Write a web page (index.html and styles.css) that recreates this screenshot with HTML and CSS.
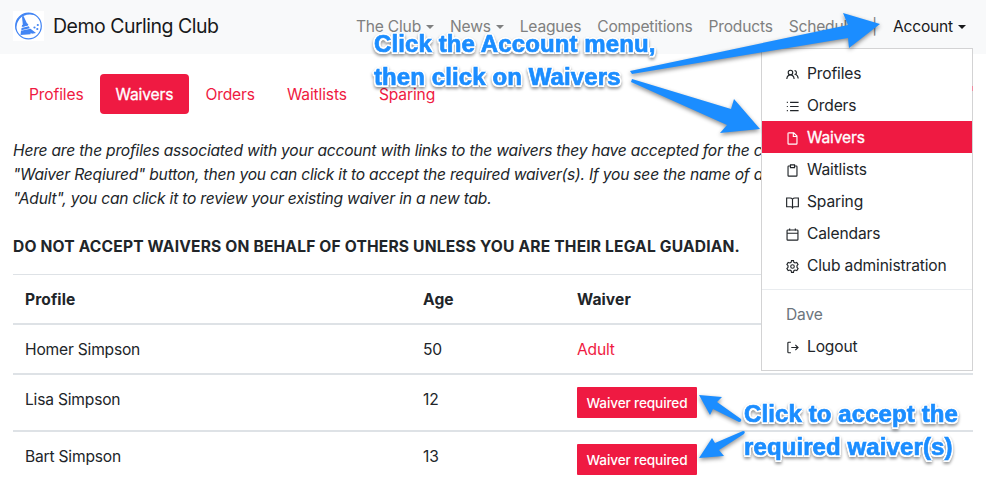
FILE: index.html
```html
<!DOCTYPE html>
<html lang="en">
<head>
<meta charset="utf-8">
<title>Demo Curling Club</title>
<link rel="stylesheet" href="styles.css">
</head>
<body>
<header class="navbar">
  <svg class="logo" viewBox="0 0 31 30">
    <rect width="31" height="30" fill="#fff"/>
    <circle cx="15.5" cy="15" r="12.8" fill="none" stroke="#4285f4" stroke-width="1.2"/>
    <path d="M3 19A13.2 13.2 0 0 1 23 4.300Q12 1.500 6.500 8Q3 13 3 19Z" fill="#4285f4"/>
    <path d="M9 5.500l1.500-.5 4.500 9.500-5 1.200z" fill="#4285f4"/>
    <path d="M9 14l5.500-1.500 1 1.600-6.700 2zM8.500 17l7.300-1.800 1 2-8.500 2zM8 19.700l9.500-2 5.500 4.300-4.200.8-1-1-.3 1.500L7.500 24z" fill="#4285f4"/>
    <circle cx="21.500" cy="16.500" r="1.100" fill="#4285f4"/><circle cx="24.800" cy="14" r="1.100" fill="#4285f4"/><circle cx="24.300" cy="18" r="1.100" fill="#4285f4"/>
  </svg>
  <span class="brand">Demo Curling Club</span>
  <nav class="links">
    <a class="caret">The Club</a><a class="caret">News</a><a>Leagues</a><a>Competitions</a><a>Products</a><a>Schedule</a><a>|</a><a class="caret active">Account</a>
  </nav>
</header>
<main>
  <nav class="pills"><a>Profiles</a><a class="on">Waivers</a><a>Orders</a><a>Waitlists</a><a>Sparing</a></nav>
  <p class="intro">Here are the profiles associated with your account with links to the waivers they have accepted for the c<br>"Waiver Reqiured" button, then you can click it to accept the required waiver(s). If you see the name of a<br>"Adult", you can click it to review your existing waiver in a new tab.</p>
  <p class="warning">DO NOT ACCEPT WAIVERS ON BEHALF OF OTHERS UNLESS YOU ARE THEIR LEGAL GUADIAN.</p>
  <div class="table">
    <div class="row head"><span>Profile</span><span>Age</span><span>Waiver</span></div>
    <div class="row"><span>Homer Simpson</span><span>50</span><span><a class="adult">Adult</a></span></div>
    <div class="row"><span>Lisa Simpson</span><span>12</span><span><button>Waiver required</button></span></div>
    <div class="row"><span>Bart Simpson</span><span>13</span><span><button>Waiver required</button></span></div>
  </div>
</main>
<i class="edge"></i>
<aside class="menu">
  <a><svg viewBox="0 0 16 16"><circle cx="5.500" cy="5.500" r="2.800"/><path d="M1 13.500c.3-3.200 2-5 4.500-5s4.200 1.800 4.500 5M10.500 3.300a2.300 2.300 0 0 1 1 4.400c2 .7 3.300 2.600 3.500 5.300"/></svg>Profiles</a>
  <a><svg viewBox="0 0 16 16"><path d="M5 3h10.500M5 8h10.500M5 13h10.500M1 3h1.300M1 8h1.300M1 13h1.300"/></svg>Orders</a>
  <a class="selected"><svg viewBox="0 0 16 16"><path d="M3.500 1h6l4 4v9.200q0 .8-.8.800H3.300q-.8 0-.8-.8V1.800q0-.8.8-.8M9 1.500v4h4"/></svg>Waivers</a>
  <a><svg viewBox="0 0 16 16"><path d="M5 2.500H3.300q-.8 0-.8.8v10.900q0 .8.800.800h9.400q.8 0 .8-.8V3.300q0-.8-.8-.8H11M5.500 1h5v3.500h-5z"/></svg>Waitlists</a>
  <a><svg viewBox="0 0 16 16"><path d="M8 4v10M8 4Q7 2.500 5 2.500H.8v10.700H6Q7.500 13.200 8 14.500Q8.500 13.200 10 13.200h5.200V2.500H11Q9 2.500 8 4"/></svg>Sparing</a>
  <a><svg viewBox="0 0 16 16"><rect x="1.300" y="2.500" width="13.400" height="12.500" rx="1"/><path d="M1.300 6.500h13.400M4.500 .5v2.500M11.500 .5v2.500"/></svg>Calendars</a>
  <a><svg viewBox="0 0 16 16"><path d="M6.800.8h2.400l.5 2 1.500.9 2-.6 1.600 2.300L13.500 7v2l1.400 1.600-1.600 2.300-2.200-.6-1.400.9-.5 2H6.800l-.5-2-1.400-.9-2.200.6-1.600-2.300L2.500 9V7L1.100 5.400l1.600-2.300 2.100.6 1.500-.9z"/><circle cx="8" cy="8" r="2.200"/></svg>Club administration</a>
  <hr>
  <span class="user">Dave</span>
  <a><svg viewBox="0 0 16 16"><path d="M6 1.500H3.300q-1 0-1 1v11q0 1 1 1H6M6.500 8h8M11.500 4.800L14.800 8l-3.300 3.200"/></svg>Logout</a>
</aside>
<svg class="arrows" viewBox="0 0 986 497">
  <path d="M630 71L848 25 843 13 880 24 849 48 848 38 632 74Z"/>
  <path d="M632 79L731 109 734 99 760 129 720 133 727 125 631 82Z"/>
  <path d="M699 395L722 397 717 402 741 419Q742 422 739 422L713 409 710 415Z"/>
  <path d="M699 458L712 438 715 443 743 431Q746 431 744 434L719 450 724 456Z"/>
</svg>
<div class="note first">Click the Account menu,<br>then click on Waivers</div>
<div class="note second">Click to accept the<br>required waiver(s)</div>
</body>
</html>
```
FILE: styles.css
```css
* { box-sizing: border-box; }
body { margin: 0; width: 986px; height: 497px; overflow: hidden; position: relative; background: #fff; color: #212529; font: 15.6px/24px Inter, sans-serif; letter-spacing: -.2px; white-space: nowrap; }
.navbar { height: 54px; background: #f8f9fa; display: flex; align-items: center; padding: 0 20px 2px 13px; }
.logo { width: 31px; height: 30px; margin-right: 9px; }
.brand { font-size: 19.5px; letter-spacing: -.5px; color: #18191b; }
.links { display: flex; margin-left: auto; gap: 16px; padding-top: 2px; color: #7f8080; }
.links a { display: flex; align-items: center; }
.caret::after { content: ""; margin-left: 5px; border: 4.5px solid transparent; border-top-color: currentColor; border-bottom: 0; }
.links .active { color: #18191b; }
main { padding: 20px 13px 0; }
.pills { display: flex; height: 40px; margin-bottom: 24px; color: #ef1a42; letter-spacing: -.13px; }
.pills a { padding: 9px 16px 7px; }
.pills .on { background: #ef1a42; color: #fff; border-radius: 4px; -webkit-text-stroke: .3px #fff; }
p { margin: 0; }
.intro { font-style: italic; padding-top: 1px; margin-bottom: 24px; width: 749px; overflow: hidden; letter-spacing: -.21px; }
.warning { font-weight: 700; margin-bottom: 15px; letter-spacing: .17px; }
.table { border-top: 1px solid #dee2e6; }
.row { display: grid; grid-template-columns: 398px 154px 1fr; padding: 13px 12px 11px; border-bottom: 2px solid #dee2e6; }
.row:last-child { border: 0; }
.head { font-weight: 700; letter-spacing: .1px; }
.adult { color: #ef1a42; }
button { display: block; width: 120px; height: 31px; margin: -1px 0 1px; padding: 1px 0 0; border: 0; border-radius: 1px; background: #ef1a42; color: #fff; font: 500 13.6px/30px Inter, sans-serif; letter-spacing: -.13px; }
.edge { position: absolute; left: 972px; top: 86px; width: 1px; height: 5px; background: #ef8aa0; z-index: 1; }
.menu { position: absolute; left: 761px; top: 48px; width: 212px; height: 323px; padding: 8px 0; background: #fff; border: 1px solid #d3d3d4; }
.menu a, .user { display: flex; align-items: center; height: 32px; padding: 2px 0 0 24px; }
.menu svg { width: 13px; height: 13px; margin-right: 8px; fill: none; stroke: currentColor; stroke-width: 1.4; }
.menu a { letter-spacing: -.15px; }
.menu .selected { background: #ef1a42; color: #fff; -webkit-text-stroke: .3px #fff; }
.menu hr { margin: 8px 0; border: 0; border-top: 1px solid #e9ecef; }
.user { color: #6c757d; }
.arrows { position: absolute; inset: 0; width: 986px; height: 497px; fill: #1b8dff; filter: drop-shadow(0 2px 2px rgb(0 0 0 / .45)); }
.note { position: absolute; color: #1b8dff; font: 700 24px/33px "Liberation Sans", sans-serif; letter-spacing: .1px; -webkit-text-stroke: .7px #1b8dff; text-shadow: 2px 0 #fff, -2px 0 #fff, 0 2px #fff, 0 -2px #fff, 1.5px 1.5px #fff, -1.5px 1.5px #fff, 1.5px -1.5px #fff, -1.5px -1.5px #fff; filter: drop-shadow(0 2px 1.5px rgb(0 0 0 / .4)); }
.first { left: 374px; top: 27px; }
.second { left: 744px; top: 397px; }
```
